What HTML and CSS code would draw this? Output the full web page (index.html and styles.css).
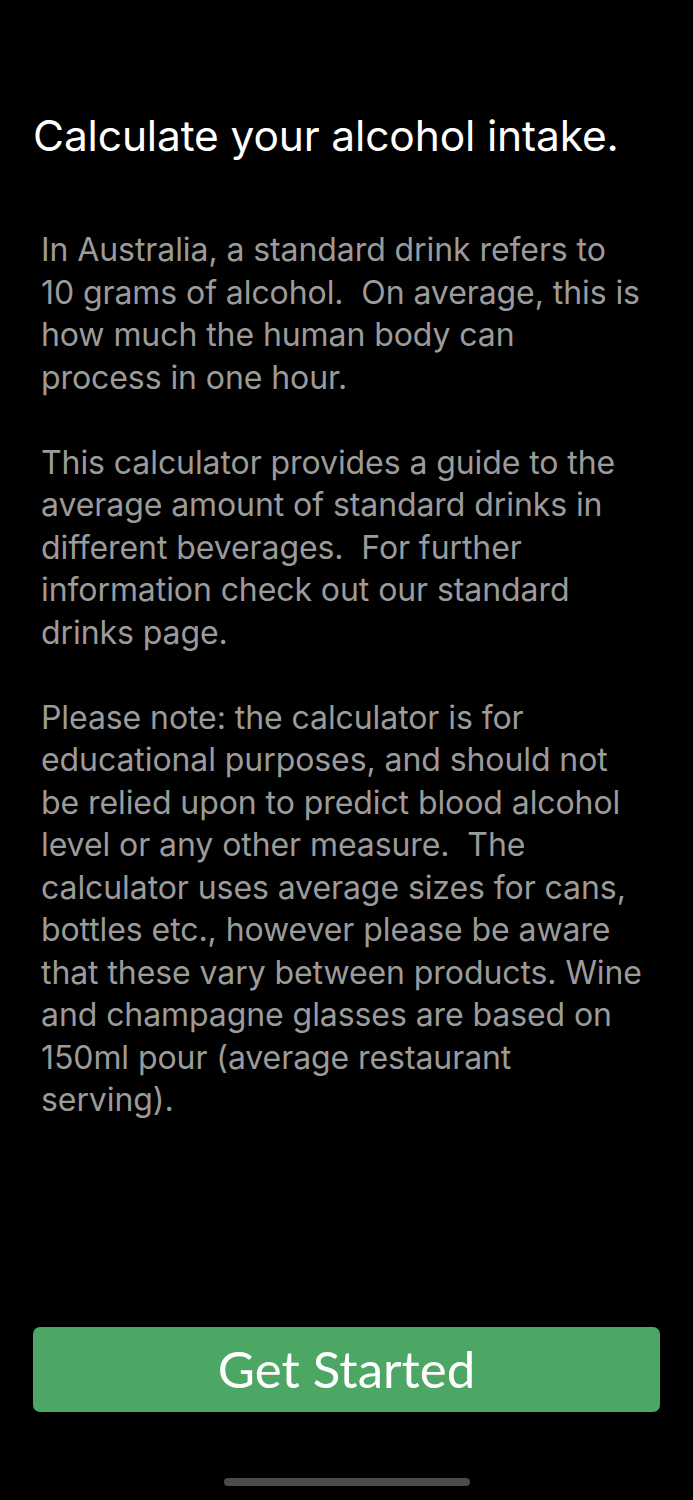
FILE: index.html
```html
<!doctype html>
<html lang="en">
<head>
    <meta charset="UTF-8">
    <meta name="viewport" content="width=device-width, initial-scale=1.0">
    <title>Calculate your alcohol intake</title>
    <link rel="stylesheet" href="styles.css">
</head>
<body>
<div class="screen">
    <h1 class="title">Calculate your alcohol intake.</h1>
    <div class="intro">
        <p>In Australia, a standard drink refers to<br>
            10 grams of alcohol.&nbsp; On average, this is<br>
            how much the human body can<br>
            process in one hour.</p>
        <p>This calculator provides a guide to the<br>
            average amount of standard drinks in<br>
            different beverages.&nbsp; For further<br>
            information check out our standard<br>
            drinks page.</p>
        <p>Please note: the calculator is for<br>
            educational purposes, and should not<br>
            be relied upon to predict blood alcohol<br>
            level or any other measure.&nbsp; The<br>
            calculator uses average sizes for cans,<br>
            bottles etc., however please be aware<br>
            that these vary between products. Wine<br>
            and champagne glasses are based on<br>
            150ml pour (average restaurant<br>
            serving).</p>
    </div>
    <div class="footer">
        <a href="javascript:;" class="startBtn">Get Started</a>
    </div>
    <div class="homeBar"></div>
</div>
</body>
</html>
```

FILE: styles.css
```css
* {
    margin: 0;
    padding: 0;
}

html, body {
    background: #000;
}

.screen {
    height: 1500px;
    display: flex;
    flex-direction: column;
    box-sizing: border-box;
    padding: 108px 33px 14px;
}

.title {
    color: #fff;
    font-family: Inter, "Noto Sans", sans-serif;
    font-weight: 400;
    font-size: 42.5px;
    line-height: 56px;
    letter-spacing: -0.15px;
    white-space: nowrap;
}

.intro {
    margin-top: 65px;
    padding: 0 8px;
    color: #9b9b9b;
    font-family: Inter, "Noto Sans", sans-serif;
    font-size: 32px;
    line-height: 42.5px;
    letter-spacing: -0.08px;
    white-space: nowrap;
}

.intro p + p {
    margin-top: 42.5px;
}

.footer {
    margin-top: auto;
}

.startBtn {
    display: flex;
    align-items: center;
    justify-content: center;
    height: 85px;
    padding-bottom: 3px;
    box-sizing: border-box;
    border-radius: 7px;
    background: #4da764;
    color: #fff;
    text-decoration: none;
    font-family: Lato, "Noto Sans", sans-serif;
    font-size: 51px;
}

.homeBar {
    width: 246px;
    height: 8px;
    margin: 66px auto 0;
    border-radius: 4px;
    background: #4b4b4b;
}
```
